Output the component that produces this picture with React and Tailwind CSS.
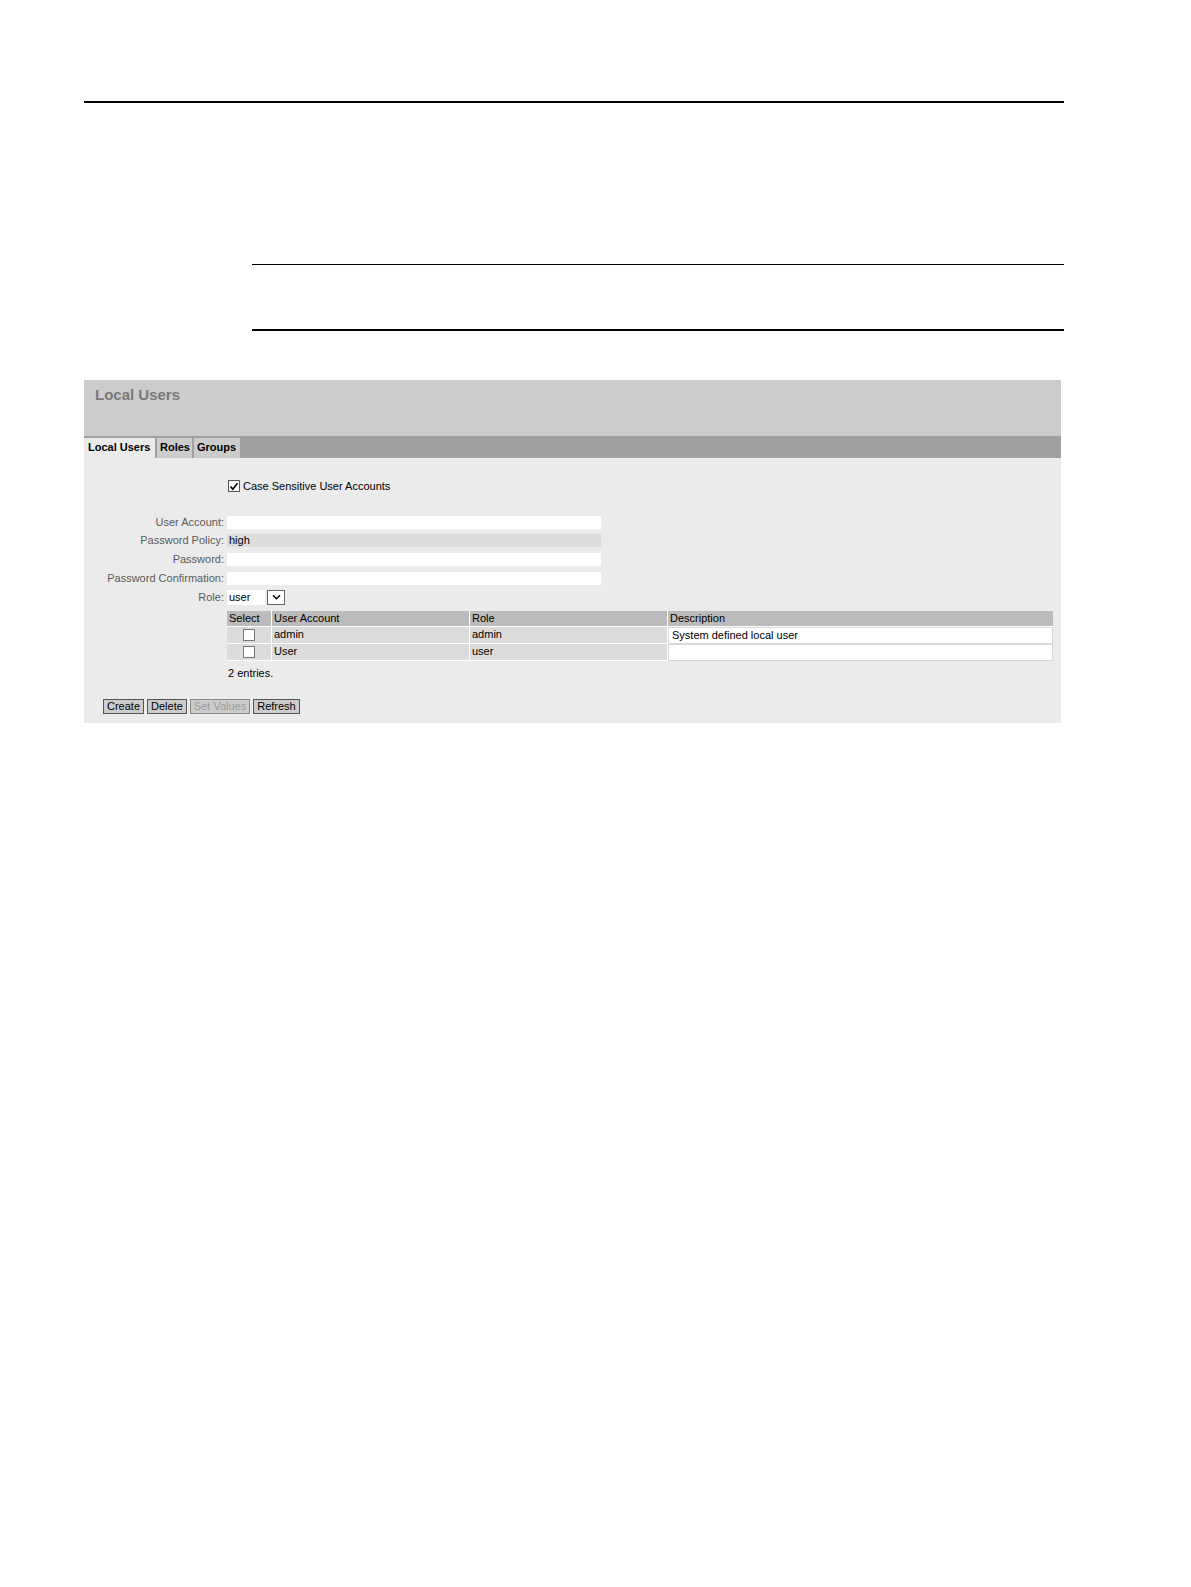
import React from 'react';

const fields = [
  { label: 'User Account:', kind: 'input' },
  { label: 'Password Policy:', kind: 'static', value: 'high' },
  { label: 'Password:', kind: 'input' },
  { label: 'Password Confirmation:', kind: 'input' },
];

const users = [
  { account: 'admin', role: 'admin', description: 'System defined local user' },
  { account: 'User', role: 'user', description: '' },
];

const Box = () => (
  <span className="inline-block w-[12px] h-[12px] bg-white border border-[#7a7a7a] align-middle" />
);

export default function App() {
  return (
    <div className="w-[1191px] h-[1587px] bg-white font-['Liberation_Sans',Arial,sans-serif] text-[11px] leading-[13px] text-black">
      <div className="pt-[101px] pl-[84px]">
        {/* document rules */}
        <div className="w-[980px] h-[1.5px] bg-black" />
        <div className="ml-[168px] mt-[161px] w-[812px] h-[1.5px] bg-black" />
        <div className="ml-[168px] mt-[64px] w-[812px] h-[1.5px] bg-black" />

        {/* web UI panel */}
        <div className="mt-[49px] w-[977px] bg-[#ebebeb]">
          <div className="h-[56px] bg-[#cccccc] pl-[11px] pt-[6px]">
            <h1 className="text-[15px] leading-[18px] font-bold text-[#7a7a7a]">Local Users</h1>
          </div>

          <div className="h-[22px] bg-[#a0a0a0] flex items-end gap-[2px]">
            <div className="h-[20px] w-[71px] bg-[#ebebeb] pl-[4px] pt-[3px] font-bold">Local Users</div>
            <div className="h-[20px] w-[35px] bg-[#cccccc] pl-[3px] pt-[3px] font-bold">Roles</div>
            <div className="h-[20px] w-[46px] bg-[#cccccc] pl-[3px] pt-[3px] font-bold">Groups</div>
          </div>

          <div className="pt-[22px] pb-[9px]">
            <label className="flex items-center gap-[3px] pl-[144px]">
              <span className="w-[12px] h-[12px] bg-white border border-[#555] flex items-center justify-center">
                <svg viewBox="0 0 12 12" className="w-[11px] h-[11px]">
                  <path d="M1.8 6 L4.6 9.2 L10.2 2.2" fill="none" stroke="#000" strokeWidth="2" />
                </svg>
              </span>
              <span>Case Sensitive User Accounts</span>
            </label>

            <div className="mt-[23px] flex flex-col gap-[5.75px]">
              {fields.map((f) => (
                <div key={f.label} className="flex items-center">
                  <div className="w-[142px] text-right pr-[2px] text-[#5a5a5a]">{f.label}</div>
                  <div
                    className={`ml-[1px] w-[374px] h-[13px] pl-[2px] ${
                      f.kind === 'static' ? 'bg-[#dcdcdc]' : 'bg-white'
                    }`}
                  >
                    {f.value}
                  </div>
                </div>
              ))}
              <div className="flex items-center -mt-[1px]">
                <div className="w-[142px] text-right pr-[2px] text-[#5a5a5a]">Role:</div>
                <div className="ml-[1px] flex items-center gap-[2px]">
                  <div className="w-[38px] h-[15px] bg-white pl-[2px] pt-[1px]">user</div>
                  <div className="w-[18px] h-[15px] bg-white border border-[#666] flex items-center justify-center">
                    <svg viewBox="0 0 10 8" className="w-[9px] h-[7px]">
                      <path d="M1 1.5 L5 5.5 L9 1.5" fill="none" stroke="#000" strokeWidth="1.6" />
                    </svg>
                  </div>
                </div>
              </div>
            </div>

            <table className="mt-[6px] ml-[143px] w-[826px] border-separate border-spacing-0">
              <thead>
                <tr className="bg-[#bbbbbb] h-[16px]">
                  <th className="w-[45px] text-left font-normal pl-[2px] border-r border-b border-white">Select</th>
                  <th className="w-[198px] text-left font-normal pl-[2px] border-r border-b border-white">User Account</th>
                  <th className="w-[198px] text-left font-normal pl-[2px] border-r border-b border-white">Role</th>
                  <th className="text-left font-normal pl-[2px] border-b border-white">Description</th>
                </tr>
              </thead>
              <tbody>
                {users.map((u) => (
                  <tr key={u.account} className="h-[17px]">
                    <td className="bg-[#dcdcdc] text-center border-r border-b border-white">
                      <Box />
                    </td>
                    <td className="bg-[#dcdcdc] pl-[2px] border-r border-b border-white">{u.account}</td>
                    <td className="bg-[#dcdcdc] pl-[2px] border-r border-b border-white">{u.role}</td>
                    <td className="bg-white pl-[3px] border border-[#d8d8d8]">{u.description}</td>
                  </tr>
                ))}
              </tbody>
            </table>

            <div className="mt-[6px] ml-[144px]">2 entries.</div>

            <div className="mt-[19px] ml-[19px] flex gap-[3px]">
              <button className="h-[15px] px-[3px] bg-[#cccccc] border border-[#555] leading-[13px]">Create</button>
              <button className="h-[15px] px-[3px] bg-[#cccccc] border border-[#555] leading-[13px]">Delete</button>
              <button className="h-[15px] px-[3px] bg-[#cccccc] border border-[#888] leading-[13px] text-[#999]">Set Values</button>
              <button className="h-[15px] px-[3px] bg-[#cccccc] border border-[#555] leading-[13px]">Refresh</button>
            </div>
          </div>
        </div>
      </div>
    </div>
  );
}
